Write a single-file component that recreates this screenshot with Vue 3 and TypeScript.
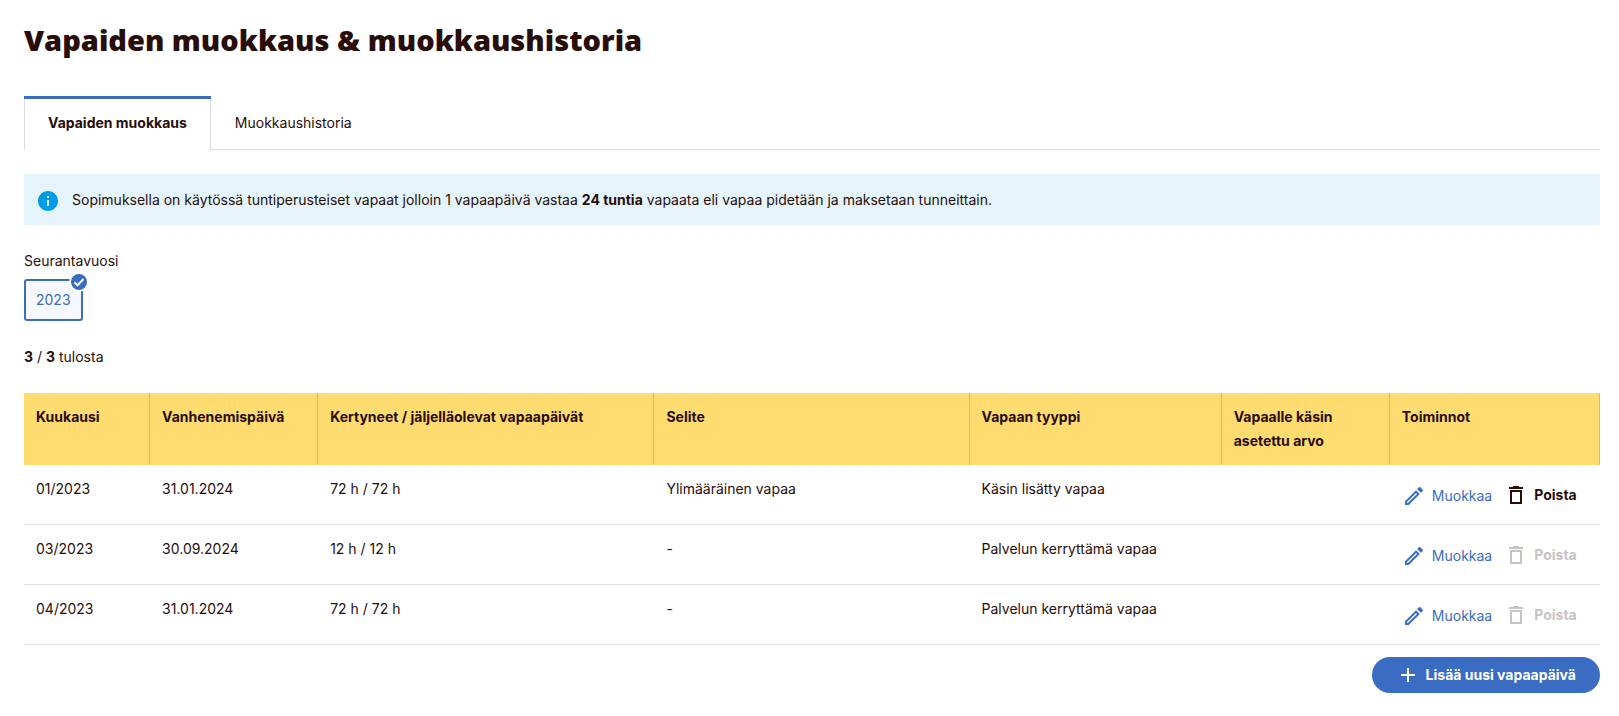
<script setup lang="ts">
import { ref } from 'vue'

interface Column {
  title: string
  weight: number
}

interface LeaveRow {
  month: string
  expires: string
  balance: string
  note: string
  kind: string
  manual: string
  removable: boolean
}

const tabs = ['Vapaiden muokkaus', 'Muokkaushistoria']
const activeTab = ref(0)
const year = ref('2023')

const columns: Column[] = [
  { title: 'Kuukausi', weight: 6 },
  { title: 'Vanhenemispäivä', weight: 8 },
  { title: 'Kertyneet / jäljelläolevat vapaapäivät', weight: 16 },
  { title: 'Selite', weight: 15 },
  { title: 'Vapaan tyyppi', weight: 12 },
  { title: 'Vapaalle käsin asetettu arvo', weight: 8 },
  { title: 'Toiminnot', weight: 10 },
]
const totalWeight = columns.reduce((sum, c) => sum + c.weight, 0)

const rows: LeaveRow[] = [
  { month: '01/2023', expires: '31.01.2024', balance: '72 h / 72 h', note: 'Ylimääräinen vapaa', kind: 'Käsin lisätty vapaa', manual: '', removable: true },
  { month: '03/2023', expires: '30.09.2024', balance: '12 h / 12 h', note: '-', kind: 'Palvelun kerryttämä vapaa', manual: '', removable: false },
  { month: '04/2023', expires: '31.01.2024', balance: '72 h / 72 h', note: '-', kind: 'Palvelun kerryttämä vapaa', manual: '', removable: false },
]
</script>

<template>
  <main class="page">
    <h1 class="title">Vapaiden muokkaus &amp; muokkaushistoria</h1>

    <div class="tabs" role="tablist">
      <button
        v-for="(tab, i) in tabs"
        :key="tab"
        type="button"
        role="tab"
        class="tab"
        :class="{ active: i === activeTab }"
        :aria-selected="i === activeTab"
        @click="activeTab = i"
      >{{ tab }}</button>
    </div>

    <div class="notice">
      <svg class="icon" viewBox="0 0 24 24" aria-hidden="true">
        <path d="M12 2C6.480 2 2 6.480 2 12s4.480 10 10 10 10-4.480 10-10S17.520 2 12 2zm1 15h-2v-6h2v6zm0-8h-2V7h2v2z" />
      </svg>
      <p>Sopimuksella on käytössä tuntiperusteiset vapaat jolloin 1 vapaapäivä vastaa <strong>24 tuntia</strong> vapaata eli vapaa pidetään ja maksetaan tunneittain.</p>
    </div>

    <fieldset class="years">
      <legend>Seurantavuosi</legend>
      <label class="year">
        <input v-model="year" type="radio" name="year" value="2023" />
        <span>2023</span>
        <svg class="badge" viewBox="0 0 20 20" aria-hidden="true">
          <circle class="ring" cx="10" cy="10" r="10" />
          <circle class="disc" cx="10" cy="10" r="8" />
          <path d="M5.500 10.200l3 3 6-6.200" />
        </svg>
      </label>
    </fieldset>

    <p class="count"><strong>3</strong> / <strong>3</strong> tulosta</p>

    <table class="grid">
      <colgroup>
        <col v-for="c in columns" :key="c.title" :style="{ width: (c.weight / totalWeight) * 100 + '%' }" />
      </colgroup>
      <thead>
        <tr>
          <th v-for="c in columns" :key="c.title" scope="col">{{ c.title }}</th>
        </tr>
      </thead>
      <tbody>
        <tr v-for="r in rows" :key="r.month">
          <td>{{ r.month }}</td>
          <td>{{ r.expires }}</td>
          <td>{{ r.balance }}</td>
          <td>{{ r.note }}</td>
          <td>{{ r.kind }}</td>
          <td>{{ r.manual }}</td>
          <td class="actions-cell">
            <div class="actions">
              <a href="#" class="edit">
                <svg class="icon" viewBox="0 0 24 24" aria-hidden="true">
                  <path d="M14.060 9.020l.92.92L5.920 19H5v-.92l9.060-9.060M17.660 3c-.25 0-.51.1-.7.29l-1.830 1.830 3.750 3.750 1.830-1.830c.39-.39.39-1.020 0-1.410l-2.340-2.340c-.2-.2-.45-.29-.71-.29zm-3.600 3.190L3 17.250V21h3.750L17.810 9.940l-3.750-3.750z" />
                </svg>
                <span>Muokkaa</span>
              </a>
              <button type="button" class="remove" :disabled="!r.removable">
                <svg class="icon" viewBox="0 0 24 24" aria-hidden="true">
                  <path d="M6 21h12V7H6v14zM8 9h8v10H8V9zm7.500-5l-1-1h-5l-1 1H5v2h14V4z" />
                </svg>
                <span>Poista</span>
              </button>
            </div>
          </td>
        </tr>
      </tbody>
    </table>

    <div class="footer">
      <button type="button" class="add">
        <svg class="icon" viewBox="0 0 24 24" aria-hidden="true">
          <path d="M19 13h-6v6h-2v-6H5v-2h6V5h2v6h6v2z" />
        </svg>
        <span>Lisää uusi vapaapäivä</span>
      </button>
    </div>
  </main>
</template>

<style>
body {
  margin: 0;
  background: #fff;
}
</style>

<style scoped>
.page {
  padding: 20px 19px 23px 24px;
  color: #280d0a;
  font: 400 14px/24px Inter, 'Liberation Sans', sans-serif;
}
p {
  margin: 0;
}
strong {
  font-weight: 700;
}
button {
  font: inherit;
  color: inherit;
  background: none;
  border: 0;
  padding: 0;
  cursor: pointer;
}
.icon {
  flex: none;
  width: 24px;
  height: 24px;
  fill: currentColor;
}
.title {
  margin: 0 0 36px;
  font: 800 29px/40px 'Open Sans', 'Noto Sans', sans-serif;
}
.tabs {
  display: flex;
  box-shadow: inset 0 -1px #dcdcdc;
}
.tab {
  padding: 15px 24px;
  line-height: 24px;
}
.tab.active {
  padding: 12px 23px 15px;
  background: #fff;
  border: solid #dcdcdc;
  border-width: 0 1px;
  box-shadow: 0 -3px #3a6cc3;
  margin-top: 3px;
  font-weight: 700;
}
.notice {
  display: flex;
  align-items: flex-start;
  gap: 12px;
  margin: 24px 0;
  padding: 15px 12px 12px;
  background: #e5f4fb;
}
.notice p {
  line-height: 22px;
}
.notice .icon {
  color: #009ce6;
}
.years {
  margin: 0;
  padding: 0;
  border: 0;
}
.years legend {
  padding: 0;
  margin-bottom: 6px;
}
.year {
  position: relative;
  display: inline-block;
  padding: 7px 10px;
  border: 2px solid #3a6cc3;
  border-radius: 3px;
  background: #f5f8fe;
  color: #3a6cc3;
  cursor: pointer;
  vertical-align: top;
}
.year input {
  position: absolute;
  inset: 0;
  margin: 0;
  opacity: 0;
}
.badge {
  position: absolute;
  top: -9px;
  right: -8px;
  width: 20px;
  height: 20px;
}
.badge .ring {
  fill: #fff;
}
.badge .disc {
  fill: #3a6cc3;
}
.badge path {
  fill: none;
  stroke: #fff;
  stroke-width: 2;
}
.count {
  margin: 24px 0;
}
.grid {
  width: 100%;
  table-layout: fixed;
  border-collapse: separate;
  border-spacing: 0;
}
.grid th,
.grid td {
  padding: 12px;
  text-align: left;
  vertical-align: top;
}
.grid th {
  background: #ffdb70;
  border-right: 1px solid #dcbb5f;
  font-weight: 700;
}
.grid td {
  border-bottom: 1px solid #e2e2e2;
}
.grid .actions-cell {
  padding: 12px 0 11px 12px;
}
.actions {
  display: flex;
  align-items: center;
  height: 36px;
}
.edit {
  display: flex;
  align-items: center;
  gap: 6px;
  padding-top: 2px;
  color: #3a6cc3;
  text-decoration: none;
}
.remove {
  display: flex;
  align-items: center;
  gap: 6px;
  margin-left: 12px;
  font-weight: 700;
}
.remove:disabled {
  color: #c9c2c2;
  cursor: default;
}
.footer {
  display: flex;
  justify-content: flex-end;
  margin-top: 12px;
}
.add {
  display: flex;
  align-items: center;
  gap: 6px;
  padding: 6px 24px;
  border-radius: 18px;
  background: #3a6cc3;
  color: #fff;
  font-weight: 700;
}
</style>
